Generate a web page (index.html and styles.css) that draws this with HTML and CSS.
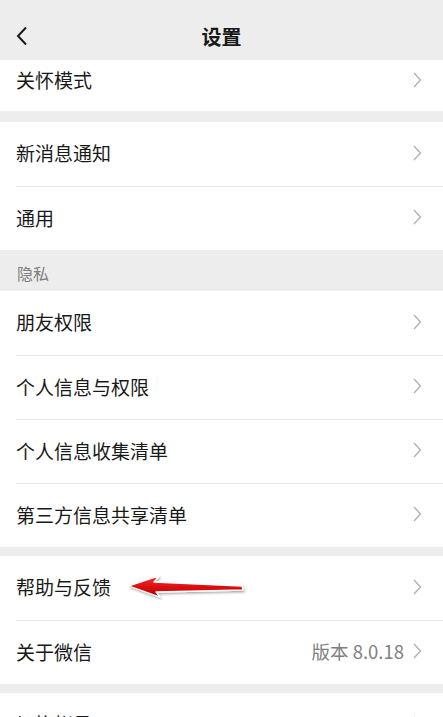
FILE: index.html
```html
<!DOCTYPE html>
<html lang="zh-CN">
<head>
    <meta charset="UTF-8">
    <meta name="viewport" content="width=device-width, initial-scale=1.0">
    <title>设置</title>
    <link rel="stylesheet" href="styles.css">
</head>
<body>
<div class="header">
    <div class="back">
        <svg width="14" height="20" viewBox="0 0 14 20"><path d="M11 1.5 L3 10 L11 18.5" fill="none" stroke="#1a1a1a" stroke-width="2"/></svg>
    </div>
    <h1>设置</h1>
    <div></div>
</div>

<div class="group">
    <div class="row first"><span>关怀模式</span><i class="arrow"></i></div>
</div>

<div class="group gap">
    <div class="row"><span>新消息通知</span><i class="arrow"></i></div>
    <div class="row"><span>通用</span><i class="arrow"></i></div>
</div>

<div class="label">隐私</div>

<div class="group">
    <div class="row"><span>朋友权限</span><i class="arrow"></i></div>
    <div class="row"><span>个人信息与权限</span><i class="arrow"></i></div>
    <div class="row"><span>个人信息收集清单</span><i class="arrow"></i></div>
    <div class="row"><span>第三方信息共享清单</span><i class="arrow"></i></div>
</div>

<div class="group gap-s">
    <div class="row mark">
        <span>帮助与反馈</span><i class="arrow"></i>
        <!-- 红色箭头标注 -->
        <svg class="pointer" width="124" height="30" viewBox="0 0 124 30">
            <defs>
                <linearGradient id="red" x1="0" y1="0" x2="0" y2="1">
                    <stop offset="0" stop-color="#f43232"/>
                    <stop offset="0.55" stop-color="#dc0e0e"/>
                    <stop offset="1" stop-color="#a00000"/>
                </linearGradient>
                <filter id="sh" x="-10%" y="-40%" width="120%" height="180%">
                    <feDropShadow dx="1" dy="1.5" stdDeviation="1.2" flood-color="#000" flood-opacity="0.35"/>
                </filter>
            </defs>
            <path d="M3 12 L33 2 L28 8 L116 12 L117 16 L30 18 L34 23 Z" fill="url(#red)" stroke="#fff" stroke-width="1.3" stroke-linejoin="round" filter="url(#sh)"/>
        </svg>
    </div>
    <div class="row"><span>关于微信</span><em>版本 8.0.18</em><i class="arrow"></i></div>
</div>

<div class="group gap-s">
    <div class="row"><span>切换帐号</span><i class="arrow"></i></div>
</div>
</body>
</html>
```
FILE: styles.css
```css
html, body {
    margin: 0;
    padding: 0;
}

body {
    width: 443px;
    height: 717px;
    overflow: hidden;
    background: #ededed;
    font-family: "Noto Sans CJK SC", "Noto Sans", sans-serif;
    color: #191919;
}

.header {
    height: 48px;
    padding-top: 12px;
    display: grid;
    grid-template-columns: 1fr auto 1fr;
    align-items: center;
}

.back {
    padding-left: 15px;
    display: flex;
}

h1 {
    margin: 0;
    font-size: 20px;
    font-weight: bold;
    color: #191919;
}

.group {
    background: #fff;
}

.gap {
    margin-top: 11px;
}

.gap-s {
    margin-top: 9px;
}

.row {
    height: 64px;
    margin-left: 16px;
    padding-right: 21px;
    padding-bottom: 3px;
    display: flex;
    align-items: center;
    border-top: 1px solid #e6e6e6;
    box-sizing: border-box;
    font-size: 19px;
}

.row:first-child {
    border-top: none;
}

.row.first {
    height: 51px;
    padding-bottom: 12px;
}

.row > span {
    flex: 1;
}

.row > em {
    font-style: normal;
    font-size: 18.5px;
    color: #7f7f7f;
    margin-right: 9px;
}

.arrow {
    width: 9px;
    height: 16px;
    background: url("data:image/svg+xml,%3Csvg xmlns='http://www.w3.org/2000/svg' width='9' height='16' viewBox='0 0 9 16'%3E%3Cpath d='M1 1 L7.5 8 L1 15' fill='none' stroke='%23b2b2b2' stroke-width='1.4'/%3E%3C/svg%3E") no-repeat;
}

.label {
    height: 41px;
    padding: 4px 0 0 17px;
    box-sizing: border-box;
    display: flex;
    align-items: center;
    font-size: 16px;
    color: #7f7f7f;
}

.mark {
    position: relative;
}

.pointer {
    position: absolute;
    left: 110px;
    top: 18px;
}
```
